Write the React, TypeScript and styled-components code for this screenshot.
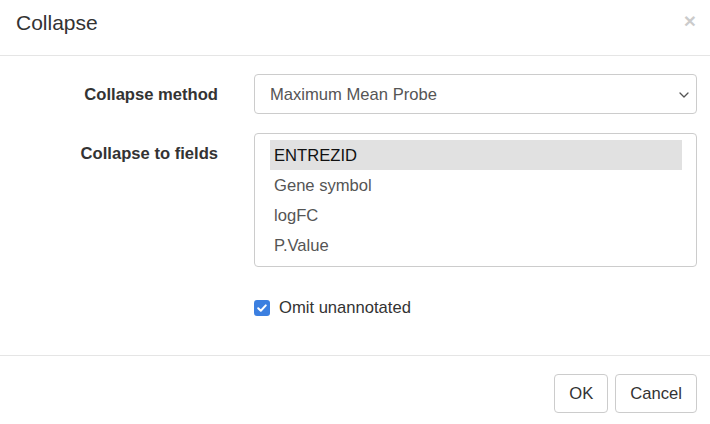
import React, { useState } from "react";
import styled, { createGlobalStyle } from "styled-components";

const Global = createGlobalStyle`
  html, body { margin: 0; padding: 0; background: #fff; }
  body { font-family: "Liberation Sans", Arial, Helvetica, sans-serif; color: #333; }
  * { box-sizing: border-box; }
`;

const Modal = styled.div`
  width: 710px;
  height: 424px;
  background: #fff;
  overflow: hidden;
  display: flex;
  flex-direction: column;
`;

const Header = styled.div`
  height: 56px;
  border-bottom: 1px solid #e5e5e5;
  display: flex;
  align-items: flex-start;
  justify-content: space-between;
  padding: 10px 14px 0 16px;
`;

const Title = styled.h4`
  margin: 0;
  font-size: 21px;
  font-weight: normal;
  line-height: 26px;
  color: #333;
`;

const Close = styled.button`
  border: 0;
  background: transparent;
  padding: 0;
  margin-top: 0;
  font-family: "Liberation Sans", Arial, sans-serif;
  font-size: 21px;
  font-weight: bold;
  line-height: 1;
  color: #000;
  opacity: 0.2;
  cursor: pointer;
`;

const Body = styled.div`
  padding: 18px 13px 35px 0;
  display: grid;
  grid-template-columns: 218px 443px;
  column-gap: 36px;
  row-gap: 19px;
  border-bottom: 1px solid #e5e5e5;
`;

const Label = styled.label<{ $top?: boolean }>`
  font-weight: bold;
  font-size: 16.6px;
  line-height: 24px;
  text-align: right;
  color: #333;
  align-self: ${(p) => (p.$top ? "start" : "center")};
  padding-top: ${(p) => (p.$top ? "9px" : "2px")};
`;

const SelectWrap = styled.div`
  position: relative;
  height: 40px;
`;

const Select = styled.select`
  appearance: none;
  -webkit-appearance: none;
  height: 40px;
  width: 100%;
  border: 1px solid #ccc;
  border-radius: 4px;
  background: #fff;
  font-family: "Liberation Sans", Arial, sans-serif;
  font-size: 16.6px;
  color: #555;
  padding: 1px 30px 0 15px;
`;

const Chevron = styled.svg`
  position: absolute;
  right: 8px;
  top: 17px;
  pointer-events: none;
`;

const ListBox = styled.div`
  border: 1px solid #ccc;
  border-radius: 4px;
  padding: 6px 14px 6px 15px;
  height: 134px;
  display: flex;
  flex-direction: column;
`;

const Option = styled.div<{ $selected?: boolean }>`
  height: 30px;
  line-height: 30px;
  padding: 1px 0 0 4px;
  font-size: 16.6px;
  color: ${(p) => (p.$selected ? "#111" : "#555")};
  background: ${(p) => (p.$selected ? "#e1e1e1" : "transparent")};
  cursor: pointer;
`;

const CheckRow = styled.label`
  grid-column: 2;
  display: flex;
  align-items: center;
  gap: 9px;
  height: 24px;
  margin-top: 10px;
  font-size: 16.6px;
  color: #333;
  cursor: pointer;
`;

const Box = styled.span<{ $on: boolean }>`
  width: 16px;
  height: 16px;
  border-radius: 3px;
  background: ${(p) => (p.$on ? "#3b7fe0" : "#fff")};
  border: ${(p) => (p.$on ? "none" : "1px solid #767676")};
  display: flex;
  align-items: center;
  justify-content: center;
`;

const Footer = styled.div`
  display: flex;
  justify-content: flex-end;
  gap: 7px;
  padding: 18px 13px 0 0;
`;

const Button = styled.button`
  height: 39px;
  padding: 0 14px;
  border: 1px solid #ccc;
  border-radius: 4px;
  background: #fff;
  font-family: "Liberation Sans", Arial, sans-serif;
  font-size: 16.6px;
  color: #333;
  cursor: pointer;
`;

const fields = ["ENTREZID", "Gene symbol", "logFC", "P.Value"];

export default function App() {
  const [sel, setSel] = useState(0);
  const [omit, setOmit] = useState(true);
  return (
    <>
      <Global />
      <Modal>
        <Header>
          <Title>Collapse</Title>
          <Close aria-label="Close">×</Close>
        </Header>
        <Body>
          <Label>Collapse method</Label>
          <SelectWrap>
            <Select defaultValue="max">
              <option value="max">Maximum Mean Probe</option>
              <option value="min">Minimum Mean Probe</option>
            </Select>
            <Chevron width="10" height="8" viewBox="0 0 10 8">
              <path d="M1 2 L5 6 L9 2" fill="none" stroke="#555" strokeWidth="1.3" strokeLinecap="round" strokeLinejoin="round" />
            </Chevron>
          </SelectWrap>
          <Label $top>Collapse to fields</Label>
          <ListBox>
            {fields.map((f, i) => (
              <Option key={f} $selected={i === sel} onClick={() => setSel(i)}>
                {f}
              </Option>
            ))}
          </ListBox>
          <CheckRow onClick={() => setOmit(!omit)}>
            <Box $on={omit}>
              {omit && (
                <svg width="12" height="12" viewBox="0 0 12 12">
                  <path d="M2.2 6.3 L4.8 8.8 L9.8 3.4" fill="none" stroke="#fff" strokeWidth="2" strokeLinecap="round" strokeLinejoin="round" />
                </svg>
              )}
            </Box>
            Omit unannotated
          </CheckRow>
        </Body>
        <Footer>
          <Button>OK</Button>
          <Button>Cancel</Button>
        </Footer>
      </Modal>
    </>
  );
}
